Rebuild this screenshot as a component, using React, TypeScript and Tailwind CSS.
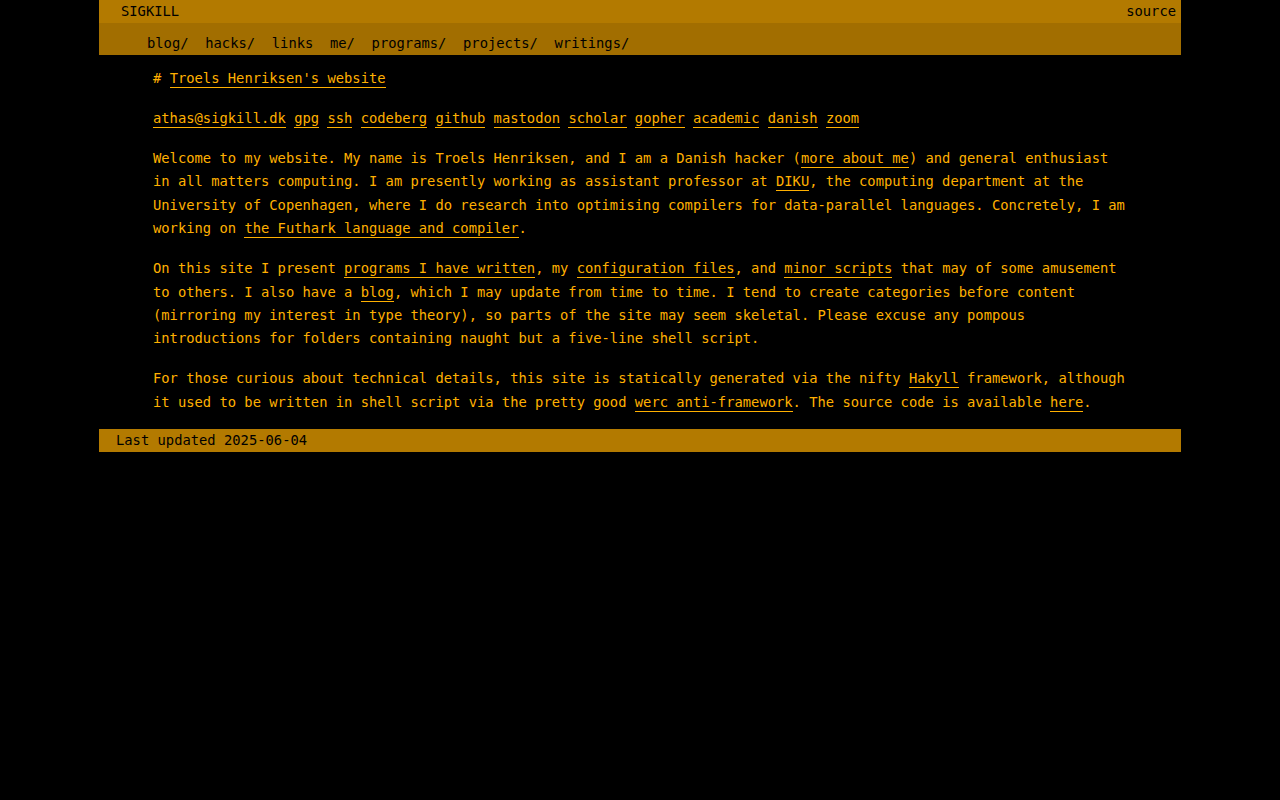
const navItems = ['blog/', 'hacks/', 'links', 'me/', 'programs/', 'projects/', 'writings/'];

const contacts = ['athas@sigkill.dk', 'gpg', 'ssh', 'codeberg', 'github', 'mastodon', 'scholar', 'gopher', 'academic', 'danish', 'zoom'];

const A = ({ children }: { children: React.ReactNode }) => (
  <a href="#" className="border-b border-[#ffb000] pb-[1px] text-[#ffb000] no-underline">
    {children}
  </a>
);

export default function App() {
  return (
    <div className="min-h-[800px] bg-black font-['DejaVu_Sans_Mono',monospace] text-[13.8px] leading-[23.4px] text-[#ffb000]">
      <div className="mx-auto w-[1082px]">
        <header>
          <div className="flex h-[23px] items-center justify-between bg-[#b37a00] pl-[22px] pr-[5px] text-black">
            <span>SIGKILL</span>
            <span>source</span>
          </div>
          <nav className="flex h-[32px] items-center gap-[16.7px] bg-[#a26e00] pl-[48px] pt-[10px] text-black">
            {navItems.map((n) => (
              <span key={n}>{n}</span>
            ))}
          </nav>
        </header>

        <main className="px-[54px] pt-[12px] pb-[15px]">
          <p className="mb-[16.6px]">
            # <A>Troels Henriksen's website</A>
          </p>
          <p className="mb-[16.6px]">
            {contacts.map((c, i) => (
              <span key={c}>
                {i > 0 && ' '}
                <A>{c}</A>
              </span>
            ))}
          </p>
          <p className="mb-[16.6px]">
            Welcome to my website. My name is Troels Henriksen, and I am a Danish hacker (<A>more about me</A>) and general
            enthusiast in all matters computing. I am presently working as assistant professor at <A>DIKU</A>, the computing
            department at the University of Copenhagen, where I do research into optimising compilers for data-parallel
            languages. Concretely, I am working on <A>the Futhark language and compiler</A>.
          </p>
          <p className="mb-[16.6px]">
            On this site I present <A>programs I have written</A>, my <A>configuration files</A>, and <A>minor scripts</A> that
            may of some amusement to others. I also have a <A>blog</A>, which I may update from time to time. I tend to create
            categories before content (mirroring my interest in type theory), so parts of the site may seem skeletal. Please
            excuse any pompous introductions for folders containing naught but a five-line shell script.
          </p>
          <p>
            For those curious about technical details, this site is statically generated via the nifty <A>Hakyll</A>{' '}
            framework, although it used to be written in shell script via the pretty good <A>werc anti-framework</A>. The
            source code is available <A>here</A>.
          </p>
        </main>

        <footer className="flex h-[23px] items-center bg-[#b37a00] pl-[17px] text-black">Last updated 2025-06-04</footer>
      </div>
    </div>
  );
}
